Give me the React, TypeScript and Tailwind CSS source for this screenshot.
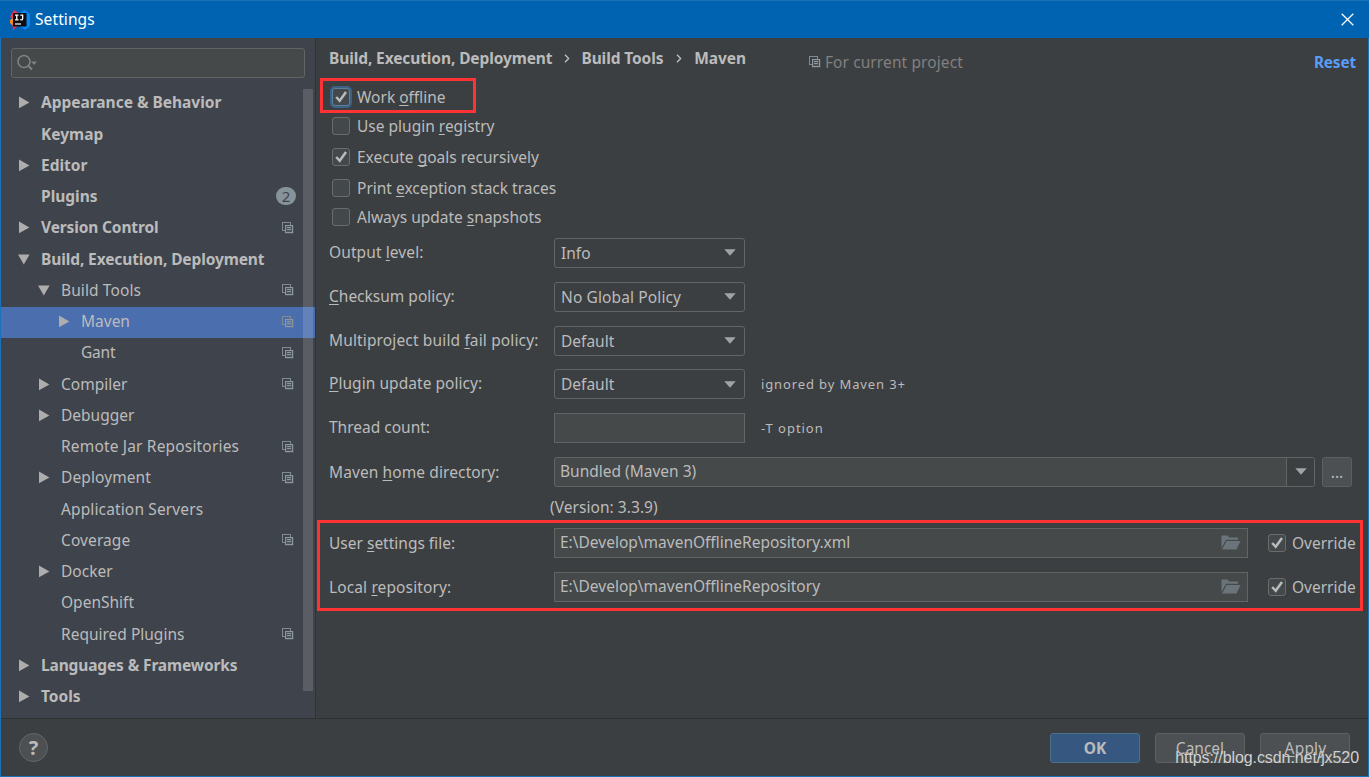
import React from "react";

type Node = {
  label: string;
  level: 0 | 1 | 2;
  arrow?: "right" | "down";
  scope?: boolean;
  badge?: string;
  selected?: boolean;
  spacing?: string;
};

const TREE: Node[] = [
  { label: "Appearance & Behavior", level: 0, arrow: "right", spacing: "tracking-[-0.02px]" },
  { label: "Keymap", level: 0 },
  { label: "Editor", level: 0, arrow: "right" },
  { label: "Plugins", level: 0, badge: "2" },
  { label: "Version Control", level: 0, arrow: "right", scope: true, spacing: "tracking-[-0.14px]" },
  { label: "Build, Execution, Deployment", level: 0, arrow: "down", spacing: "tracking-[-0.11px]" },
  { label: "Build Tools", level: 1, arrow: "down", scope: true, spacing: "tracking-[0.1px]" },
  { label: "Maven", level: 2, arrow: "right", scope: true, selected: true },
  { label: "Gant", level: 2, scope: true, spacing: "tracking-[-0.2px]" },
  { label: "Compiler", level: 1, arrow: "right", scope: true },
  { label: "Debugger", level: 1, arrow: "right" },
  { label: "Remote Jar Repositories", level: 1, scope: true, spacing: "tracking-[0.17px]" },
  { label: "Deployment", level: 1, arrow: "right", scope: true, spacing: "tracking-[0.1px]" },
  { label: "Application Servers", level: 1, spacing: "tracking-[0.13px]" },
  { label: "Coverage", level: 1, scope: true, spacing: "tracking-[0.1px]" },
  { label: "Docker", level: 1, arrow: "right" },
  { label: "OpenShift", level: 1 },
  { label: "Required Plugins", level: 1, scope: true },
  { label: "Languages & Frameworks", level: 0, arrow: "right", spacing: "tracking-[-0.14px]" },
  { label: "Tools", level: 0, arrow: "right" },
];

const INDENT = { 0: "pl-[16px]", 1: "pl-[36px]", 2: "pl-[56px]" };

function ScopeIcon() {
  return (
    <svg width="12" height="12" viewBox="0 0 12 12" fill="none" shapeRendering="crispEdges" className="shrink-0">
      <path d="M2.5 8.5h-2v-8h8v2" stroke="#7f8b91" />
      <rect x="3" y="3" width="9" height="9" fill="#7f8b91" fillOpacity="0.25" />
      <rect x="3.5" y="3.5" width="7" height="7" stroke="#8d989e" />
      <path d="M5 5.5h4M5 7.5h4" stroke="#8d989e" />
    </svg>
  );
}

function TreeArrow({ dir }: { dir?: "right" | "down" }) {
  return (
    <svg width="13" height="13" viewBox="0 0 13 13" className="relative -top-px shrink-0" fill="#adadad">
      {dir === "right" && <path d="M2 .5 12.4 6.5 2 12.3z" />}
      {dir === "down" && <path d="M1 1.5h11.6L6.8 11.6z" />}
    </svg>
  );
}

/** Label whose mnemonic letter follows an underscore. */
function Mnemonic({ text }: { text: string }) {
  const i = text.indexOf("_");
  if (i < 0) return <>{text}</>;
  return (
    <>
      {text.slice(0, i)}
      <span className="underline decoration-1 underline-offset-[2px] [text-decoration-skip-ink:none]">{text[i + 1]}</span>
      {text.slice(i + 2)}
    </>
  );
}

function Box({ checked, focused }: { checked?: boolean; focused?: boolean }) {
  return (
    <span
      className={
        "flex size-[18px] shrink-0 items-center justify-center rounded-[3px] border bg-[#43494a] " +
        (focused ? "border-[#5c7f9f] ring-[2px] ring-[#3d6185]" : "border-[#6b6b6b]")
      }
    >
      {checked && (
        <svg width="16" height="16" viewBox="0 0 16 16" fill="none" stroke="#b8babb" strokeWidth="2.5">
          <path d="M3.200 8 6.700 11.800 13 3" />
        </svg>
      )}
    </span>
  );
}

function CheckRow({ text, checked, focused, className }: { text: string; checked?: boolean; focused?: boolean; className: string }) {
  return (
    <div className={"flex items-center gap-[7px] pl-[16px] " + className}>
      <Box checked={checked} focused={focused} />
      <span className="whitespace-pre"><Mnemonic text={text} /></span>
    </div>
  );
}

function Triangle() {
  return (
    <svg width="12" height="7" viewBox="0 0 12 7" fill="#a0a3a5" className="shrink-0">
      <path d="M.3 .3h11.4L6 6.7z" />
    </svg>
  );
}

function Combo({ value, spacing = "" }: { value: string; spacing?: string }) {
  return (
    <div className="flex h-[30px] w-[191px] items-center justify-between rounded-[3px] border border-[#646464] pr-[8px] pl-[6px]">
      <span className={spacing}>{value}</span>
      <Triangle />
    </div>
  );
}

function FormRow({ label, children, labelClass = "" }: { label: string; children?: React.ReactNode; labelClass?: string }) {
  return (
    <div className="flex h-[43.8px] items-center pl-[13px]">
      <span className={"w-[225px] shrink-0 whitespace-pre " + labelClass}><Mnemonic text={label} /></span>
      {children}
    </div>
  );
}

function PathField({ value }: { value: string }) {
  return (
    <>
      <div className="flex h-[30px] w-[694px] shrink-0 items-center justify-between border border-[#646464] bg-[#45494a] pr-[6px] pl-[5px]">
        <span className="relative -top-px">{value}</span>
        <svg width="20" height="15" viewBox="0 0 20 15" fill="#6b747a">
          <path d="M.5 13V.5h5.7l2 2H17v2.3H5z" />
          <path d="M5.6 6H19.5L15.5 14.5H1z" />
        </svg>
      </div>
      <div className="ml-[20px] flex items-center gap-[6px]">
        <Box checked />
        <span>Override</span>
      </div>
    </>
  );
}

function Logo() {
  return (
    <svg width="20" height="20" viewBox="0 0 20 20">
      <path d="M4 0 10 4 4 9 0 7z" fill="#f5325b" />
      <path d="M0 10 3 8v8l-3-3z" fill="#fb8a1e" />
      <path d="M2.500 14 9 15 3 20z" fill="#ee2f5d" />
      <path d="M9 3 15 0l5 4v12l-5 4-5-4z" fill="#0b86f5" />
      <rect x="3" y="3" width="13.500" height="13.500" fill="#100d10" />
      <g fill="#fff">
        <path d="M5 4.500h3.500v1.200H7.400v3.600h1.100v1.200H5V9.300h1.100V5.700H5z" />
        <path d="M10.300 4.500h3v4.200q0 1.900-1.900 1.900-1 0-1.700-.8l.8-.9q.4.400.8.400.7 0 .7-.9V5.700h-1.700z" />
        <rect x="5" y="13.400" width="6" height="1.200" />
      </g>
    </svg>
  );
}

function Crumb() {
  return (
    <svg width="6" height="9" viewBox="0 0 6 9" fill="none" stroke="#bbbbbb" strokeWidth="1.4">
      <path d="M1 .7 4.600 4.500 1 8.300" />
    </svg>
  );
}

export default function App() {
  return (
    <div className="relative flex h-[777px] w-[1369px] flex-col overflow-hidden bg-[#3c3f41] font-['Noto_Sans','Open_Sans',sans-serif] text-[15.5px] leading-[20px] text-[#bbbbbb]">
      <header className="flex h-[38px] shrink-0 items-center border-t border-[#1a73b9] bg-[#0063b1] pr-[15px] pl-[10px] text-white">
        <Logo />
        <span className="relative -top-px ml-[5px] tracking-[0.1px]">Settings</span>
        <svg className="ml-auto" width="13" height="13" viewBox="0 0 13 13" stroke="#fff" strokeWidth="1.3">
          <path d="M.7.7 12.300 12.300M12.300.7.7 12.300" />
        </svg>
      </header>

      <div className="flex min-h-0 flex-1 flex-col border-x border-b border-[#1a73b9]">
        <div className="flex h-[680px] shrink-0">
          <aside className="relative w-[314px] shrink-0 bg-[#3f434b] pt-[10px]">
            <div className="mx-[10px] flex h-[30px] w-[294px] items-center rounded-[3px] border border-[#646464] bg-[#45494a] pl-[5px]">
              <svg width="22" height="18" viewBox="0 0 22 18" fill="none">
                <circle cx="7" cy="7.500" r="6" stroke="#7c8386" strokeWidth="1.600" />
                <path d="M11 11.500 15 15.500" stroke="#7c8386" strokeWidth="2" />
                <path d="M14 7.500h6l-3 3.500z" fill="#7c8386" />
              </svg>
            </div>
            <nav className="mt-[10.2px]">
              {TREE.map((n) => (
                <div
                  key={n.label}
                  className={"flex h-[31.25px] items-center pr-[21px] " + INDENT[n.level] + (n.selected ? " bg-[#4b6eaf]" : "")}
                >
                  <TreeArrow dir={n.arrow} />
                  <span
                    className={
                      "relative -top-[1.5px] ml-[11px] whitespace-pre " + (n.level === 0 ? "font-bold " : "") + (n.spacing ?? "")
                    }
                  >
                    {n.label}
                  </span>
                  <span className="relative -top-px ml-auto flex items-center">
                    {n.scope && <ScopeIcon />}
                    {n.badge && (
                      <span className="relative -top-px -mr-[2px] flex h-[18px] w-[20px] items-center justify-center rounded-full bg-[#87939a] text-[15px] text-[#3f434b]">{n.badge}</span>
                    )}
                  </span>
                </div>
              ))}
            </nav>
            <div className="absolute top-[51px] right-[2px] h-[602px] w-[10px] bg-white/14" />
          </aside>

          <main className="flex-1 border-l border-[#323232]">
            <div className="flex h-[44px] items-start pt-[10px] pl-[13px]">
              <div className="flex items-center font-bold tracking-[-0.11px]">
                <span>Build, Execution, Deployment</span>
                <span className="flex w-[29px] justify-center"><Crumb /></span>
                <span>Build Tools</span>
                <span className="flex w-[31px] justify-center"><Crumb /></span>
                <span>Maven</span>
              </div>
              <div className="mt-[4px] ml-[63px] flex items-center gap-[4px] tracking-[0.1px] text-[#808080]">
                <ScopeIcon />
                <span>For current project</span>
              </div>
              <span className="mt-[4px] mr-[12px] ml-auto text-[15.3px] font-bold tracking-[-0.1px] text-[#589df6]">Reset</span>
            </div>

            <CheckRow className="h-[30px]" text="Work _offline" checked focused />
            <CheckRow className="h-[28px]" text="Use plugin _registry" />
            <CheckRow className="h-[34px]" text="Execute _goals recursively" checked />
            <CheckRow className="h-[28px]" text="Print _exception stack traces" />
            <CheckRow className="h-[29.1px]" text="Always update _snapshots" />

            <FormRow label="Output _level:" labelClass="relative -top-px tracking-[0.1px]"><Combo value="Info" /></FormRow>
            <FormRow label="_Checksum policy:" labelClass="relative -top-px"><Combo value="No Global Policy" spacing="tracking-[0.12px]" /></FormRow>
            <FormRow label="Multiproject build _fail policy:" labelClass="relative -top-px tracking-[0.14px]"><Combo value="Default" /></FormRow>
            <FormRow label="_Plugin update policy:" labelClass="relative -top-px tracking-[0.05px]">
              <Combo value="Default" />
              <span className="ml-[16px] text-[13px] tracking-[0.88px]">ignored by Maven 3+</span>
            </FormRow>
            <FormRow label="Thread count:" labelClass="relative -top-px">
              <div className="h-[30px] w-[191px] border border-[#646464] bg-[#45494a]" />
              <span className="ml-[16px] text-[13px] tracking-[0.95px]">-T option</span>
            </FormRow>
            <FormRow label="Maven _home directory:" labelClass="tracking-[0.1px]">
              <div className="flex h-[30px] w-[761px] items-stretch rounded-[3px] border border-[#646464] bg-[#45494a]">
                <span className="flex flex-1 items-center pb-[2px] pl-[5px]">Bundled (Maven 3)</span>
                <span className="flex w-[28px] items-center justify-center rounded-r-[2px] border-l border-[#646464] bg-[#3c3f41]">
                  <Triangle />
                </span>
              </div>
              <div className="ml-[7px] flex h-[30px] w-[30px] items-center justify-center rounded-[3px] border border-[#5e6060] bg-[#4c5052]">...</div>
            </FormRow>
            <div className="flex h-[27.2px] items-center pl-[234px] tracking-[0.05px]">(Version: 3.3.9)</div>
            <FormRow label="User _settings file:"><PathField value="E:\Develop\mavenOfflineRepository.xml" /></FormRow>
            <FormRow label="Local _repository:" labelClass="tracking-[0.12px]"><PathField value="E:\Develop\mavenOfflineRepository" /></FormRow>
          </main>
        </div>

        <footer className="flex flex-1 items-center border-t border-[#2f3133] pr-[18px] pl-[18px]">
          <span className="flex size-[29px] items-center justify-center rounded-full border border-[#646668] bg-[#4c5052] text-[20px] font-bold">?</span>
          <div className="ml-auto flex gap-[15px]">
            <span className="flex h-[30px] w-[90px] items-center justify-center rounded-[3px] border border-[#4c708c] bg-[#365880] font-bold">OK</span>
            <span className="flex h-[30px] w-[90px] items-center justify-center rounded-[3px] border border-[#5e6060] bg-[#4c5052]">Cancel</span>
            <span className="flex h-[30px] w-[90px] items-center justify-center rounded-[3px] border border-[#5e6060] bg-[#4c5052] pl-px tracking-[0.2px]"><span><Mnemonic text="_Apply" /></span></span>
          </div>
        </footer>
      </div>

      <div className="absolute top-[78px] left-[320px] h-[35px] w-[156px] border-[3px] border-[#ff3333]" />
      <div className="absolute top-[520px] left-[317px] h-[91px] w-[1046px] border-[3px] border-[#ff3333]" />
      <span className="absolute right-[10px] bottom-[9px] font-['Liberation_Sans',sans-serif] text-[16px] tracking-[-0.08px] text-[#d0d1d1]">https://blog.csdn.net/jx520</span>
    </div>
  );
}
